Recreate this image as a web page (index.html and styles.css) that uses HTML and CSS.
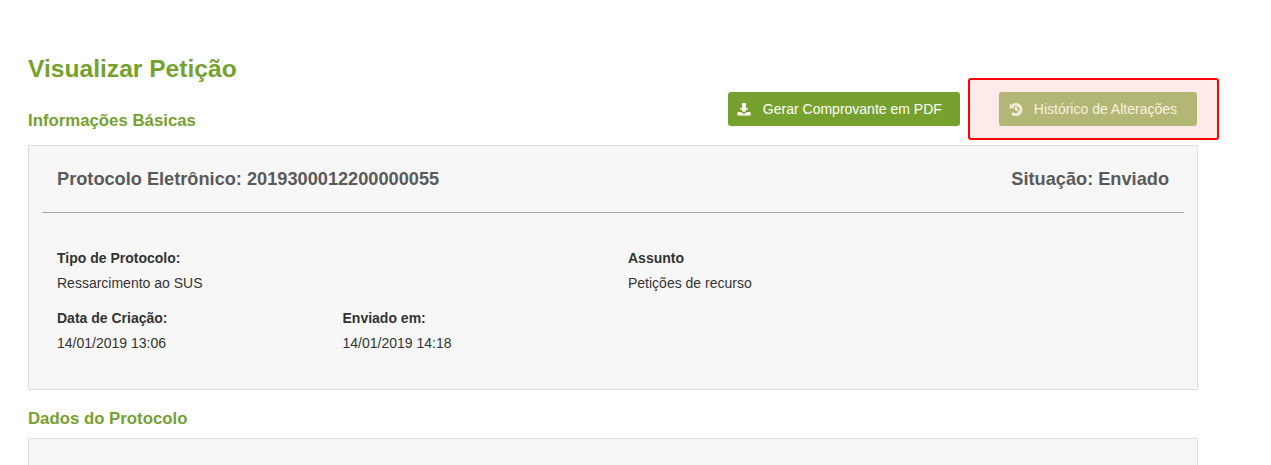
FILE: index.html
```html
<!DOCTYPE html>
<html lang="pt-BR">

<head>
    <meta charset="UTF-8">
    <title>Visualizar Petição</title>
    <link rel="stylesheet" href="styles.css">
</head>

<body>
    <div class="page">
        <h1 class="page-title">Visualizar Petição</h1>

        <div class="section-head">
            <h2 class="section-title">Informações Básicas</h2>
            <div class="actions">
                <button type="button" class="btn">
                    <svg class="btn-icon" viewBox="0 0 14 14" width="14" height="14">
                        <path d="M5 1h4v5h2.600L7 10.400 2.400 6H5z" fill="#fff" />
                        <path d="M0.500 10h3.300L7 12.300 10.200 10h3.300v3.500H0.500z" fill="#fff" />
                    </svg>
                    Gerar Comprovante em PDF
                </button>
                <div class="highlight">
                    <button type="button" class="btn btn-faded">
                        <svg class="btn-icon" viewBox="0 0 14 14" width="14" height="14">
                            <path d="M0.800 1.300v5h5L4.100 4.600A3.800 3.800 0 1 1 4 10.100L2.300 12.200A6.500 6.500 0 1 0 2.400 2.900z" fill="#f3efd9" />
                            <path d="M6 4.200h2.100v2.600l1.700 1.100-1.100 1.600L6 7.800z" fill="#f3efd9" />
                        </svg>
                        Histórico de Alterações
                    </button>
                </div>
            </div>
        </div>

        <div class="panel">
            <div class="panel-head">
                <span>Protocolo Eletrônico: 2019300012200000055</span>
                <span>Situação: Enviado</span>
            </div>
            <div class="info-grid">
                <div class="field field-wide">
                    <div class="field-label">Tipo de Protocolo:</div>
                    <div class="field-value">Ressarcimento ao SUS</div>
                </div>
                <div class="field field-wide">
                    <div class="field-label">Assunto</div>
                    <div class="field-value">Petições de recurso</div>
                </div>
                <div class="field">
                    <div class="field-label">Data de Criação:</div>
                    <div class="field-value">14/01/2019 13:06</div>
                </div>
                <div class="field">
                    <div class="field-label">Enviado em:</div>
                    <div class="field-value">14/01/2019 14:18</div>
                </div>
            </div>
        </div>

        <h2 class="section-title section-title-next">Dados do Protocolo</h2>
        <div class="panel panel-empty"></div>
    </div>
</body>

</html>
```

FILE: styles.css
```css
html,
body {
    margin: 0;
    height: 465px;
    overflow: hidden;
    background: #fff;
}

body {
    font-family: "Liberation Sans", Arial, sans-serif;
    font-size: 14px;
    color: #333;
}

.page {
    width: 1170px;
    padding: 55px 0 0 28px;
}

.page-title {
    margin: 0;
    font-size: 24.6px;
    line-height: 28px;
    font-weight: bold;
    color: #76a12f;
}

.section-head {
    display: flex;
    justify-content: space-between;
    align-items: flex-start;
    margin-top: 9px;
}

.section-title {
    margin: 19px 0 0;
    font-size: 16.8px;
    line-height: 20px;
    font-weight: bold;
    color: #76a12f;
}

.actions {
    display: flex;
    align-items: flex-start;
}

.btn {
    display: flex;
    align-items: center;
    gap: 12px;
    height: 34px;
    padding: 0 18px 0 9px;
    border: 0;
    border-radius: 3px;
    background: #76a12f;
    color: #fff;
    font-family: inherit;
    font-size: 14px;
    cursor: pointer;
}

.btn-faded {
    gap: 11px;
    background: #b3b775;
    color: #f8f2e2;
    padding: 0 20px 0 10px;
}

.highlight {
    display: flex;
    margin: -14px -21px 0 8px;
    padding: 12px 20px 12px 29px;
    border: 2px solid #f00;
    border-radius: 3px;
    background: #ffeaea;
}

.panel {
    box-sizing: border-box;
    margin-top: 5px;
    height: 245px;
    padding: 0 13px;
    border: 1px solid #ddd;
    background: #f7f7f7;
}

.panel-head {
    display: flex;
    justify-content: space-between;
    padding: 23px 15px 23px;
    line-height: 20px;
    font-size: 18.2px;
    font-weight: bold;
    color: #5a5a5a;
    border-bottom: 1px solid #a5a5a5;
}

.info-grid {
    display: grid;
    grid-template-columns: 285.5px 285.5px 1fr;
    padding: 35px 15px 0;
}

.field {
    height: 60px;
}

.field-wide {
    grid-column: span 2;
}

.field-wide + .field-wide {
    grid-column: 3;
}

.field-label {
    line-height: 20px;
    font-weight: bold;
}

.field-value {
    margin-top: 5px;
    line-height: 20px;
}

.panel-empty {
    margin-top: 9px;
    height: 27px;
    border-bottom: 0;
}
```
